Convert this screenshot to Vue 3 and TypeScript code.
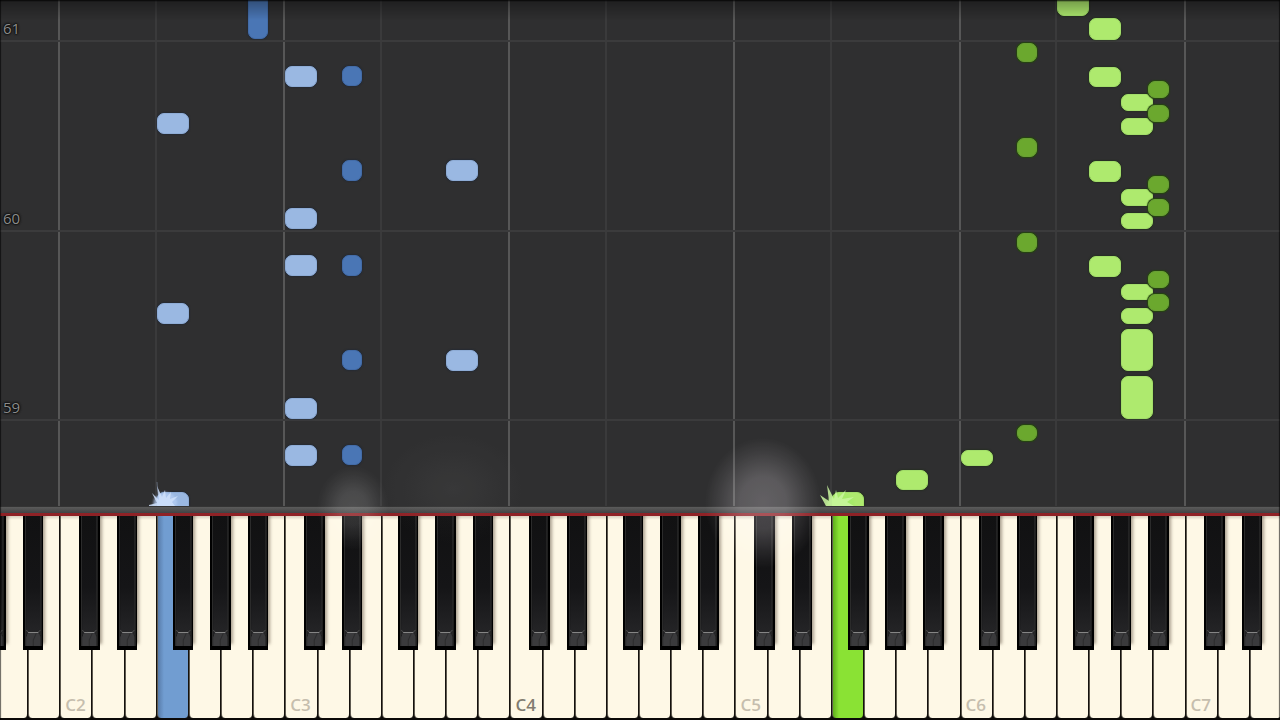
<script setup lang="ts">
type Hand = 'left' | 'right'

interface Note {
  pitch: string
  top: number
  end: number
  hand: Hand
}

// The strip shows 40 white keys, from A1 to E7.
const WHITE_COUNT = 40
const KEY = 100 / WHITE_COUNT
const SEMITONE = (KEY * 7) / 12
const ROLL_SPAN = 506
const NATURALS = ['C', 'D', 'E', 'F', 'G', 'A', 'B']
const SHARPS: Record<string, number> = { 'C#': 1, 'D#': 3, 'F#': 6, 'G#': 8, 'A#': 10 }

function octaveStart(octave: number): number {
  return (2 + (octave - 2) * 7) * KEY
}

function pitchLeft(pitch: string): number {
  const name = pitch.slice(0, -1)
  const start = octaveStart(Number(pitch.slice(-1)))
  return name in SHARPS ? start + SHARPS[name] * SEMITONE : start + NATURALS.indexOf(name) * KEY
}

const whiteKeys = Array.from({ length: WHITE_COUNT }, (_, i) => {
  const n = i + 5
  return NATURALS[n % 7] + (Math.floor(n / 7) + 1)
})

const blackKeys: string[] = ['G#1', 'A#1']
for (let octave = 2; octave <= 6; octave++) {
  for (const name of Object.keys(SHARPS)) blackKeys.push(name + octave)
}
blackKeys.push('C#7', 'D#7')

const pressed: Record<string, Hand> = { F2: 'left', F5: 'right' }

const guides = [2, 3, 4, 5, 6, 7].flatMap((o) =>
  o < 7 ? [{ pitch: 'C' + o, major: true }, { pitch: 'F' + o, major: false }] : [{ pitch: 'C' + o, major: true }],
)

const measures = [
  { number: 61, y: 42 },
  { number: 60, y: 232 },
  { number: 59, y: 421 },
]

function series(hand: Hand, pitch: string, spans: [number, number][]): Note[] {
  return spans.map(([top, end]) => ({ pitch, top, end, hand }))
}

const notes: Note[] = [
  ...series('left', 'F2', [[113, 134], [303, 324], [492, 514]]),
  ...series('left', 'A#2', [[-20, 39]]),
  ...series('left', 'C3', [[66, 87], [208, 229], [255, 276], [398, 419], [445, 466]]),
  ...series('left', 'D#3', [[66, 86], [160, 181], [255, 276], [350, 370], [445, 465]]),
  ...series('left', 'A3', [[160, 181], [350, 371]]),
  ...series('right', 'F5', [[492, 514]]),
  ...series('right', 'A5', [[470, 490]]),
  ...series('right', 'C6', [[450, 466]]),
  ...series('right', 'F6', [[-10, 16]]),
  ...series('right', 'G6', [[18, 40], [67, 87], [161, 182], [256, 277]]),
  ...series('right', 'A6', [[94, 111], [118, 135], [189, 206], [213, 229], [284, 300], [308, 324], [329, 371], [376, 419]]),
  ...series('right', 'D#6', [[43, 62], [138, 157], [233, 252], [425, 441]]),
  ...series('right', 'A#6', [[81, 98], [105, 122], [176, 193], [199, 216], [271, 288], [294, 311]]),
]

function noteStyle(n: Note) {
  return {
    left: pitchLeft(n.pitch) + '%',
    top: (n.top / ROLL_SPAN) * 100 + '%',
    height: ((n.end - n.top) / ROLL_SPAN) * 100 + '%',
  }
}

const glows = [
  { pitch: 'D#3', kind: 'small' },
  { pitch: 'G#3', kind: 'faint' },
  { pitch: 'C#5', kind: 'large' },
]
</script>

<template>
  <main class="app">
    <section class="roll" aria-label="Falling notes">
      <div class="strip">
        <div
          v-for="g in guides"
          :key="g.pitch"
          class="guide"
          :class="{ major: g.major }"
          :style="{ left: pitchLeft(g.pitch) + '%' }"
        ></div>
        <div
          v-for="m in measures"
          :key="m.number"
          class="measure"
          :style="{ bottom: ((ROLL_SPAN - m.y) / ROLL_SPAN) * 100 + '%' }"
        >
          <span>{{ m.number }}</span>
        </div>
        <div
          v-for="(n, i) in notes"
          :key="i"
          class="note"
          :class="[n.hand, { sharp: n.pitch.includes('#') }]"
          :style="noteStyle(n)"
        ></div>
        <svg
          v-for="(hand, pitch) in pressed"
          :key="pitch"
          class="spark"
          :class="hand"
          :style="{ left: pitchLeft(String(pitch)) + '%' }"
          viewBox="0 0 44 24"
          aria-hidden="true"
        >
          <g v-if="hand === 'left'">
            <path class="halo" d="M8 24 L9 17 L14 12 L20 10 L27 12 L32 18 L32 24Z" />
            <path class="ray" d="M4 23 L12 21 L7 11 L14 18 L12 4 L17 15 L20 8 L21 16 L26 10 L25 17 L33 14 L27 20 L30 24 L4 24Z" />
            <path class="streak" d="M13 12 L12 0" />
          </g>
          <g v-else>
            <path class="halo" d="M6 24 L8 18 L14 13 L20 11 L28 12 L34 18 L34 24Z" />
            <path class="ray" d="M6 24 L0 13 L9 19 L7 3 L14 17 L16 8 L18 16 L26 8 L22 17 L34 15 L27 20 L34 24Z" />
          </g>
        </svg>
      </div>
    </section>

    <div class="rail"></div>

    <section class="keyboard" aria-label="Piano keyboard">
      <div class="strip keys">
        <button
          v-for="k in whiteKeys"
          :key="k"
          type="button"
          class="white"
          :class="pressed[k]"
          :aria-label="k"
        >
          <span v-if="k[0] === 'C'" :class="{ middle: k === 'C4' }">{{ k }}</span>
        </button>
        <button
          v-for="k in blackKeys"
          :key="k"
          type="button"
          class="black"
          :aria-label="k"
          :style="{ left: pitchLeft(k) + '%' }"
        >
          <svg viewBox="0 0 20 134" preserveAspectRatio="none" aria-hidden="true">
            <defs>
              <linearGradient :id="'face' + k.replace('#', 's')" x1="0" y1="0" x2="0" y2="1">
                <stop offset="0" stop-color="#111112" />
                <stop offset=".6" stop-color="#151517" />
                <stop offset="1" stop-color="#252527" />
              </linearGradient>
            </defs>
            <rect width="20" height="134" fill="#000" />
            <rect x="3" width="14" height="119" :fill="`url(#face${k.replace('#', 's')})`" />
            <path d="M2.5 0V130" stroke="#2e2e2e" />
            <path d="M17.5 0V130" stroke="#3c3c3c" />
            <path d="M3 130V121Q4 117 6 117H14Q16 117 17 121V130Z" fill="#3a3a3c" />
            <path d="M10 130V124L13 117" fill="none" stroke="#2c2c2e" />
            <path d="M5 116.5H15" stroke="#858585" />
            <path d="M3 114L5 116M17 114L15 116" stroke="#4a4a4a" />
          </svg>
        </button>
      </div>
    </section>

    <div class="effects" aria-hidden="true">
      <div class="strip">
        <div
          v-for="g in glows"
          :key="g.pitch"
          class="glow"
          :class="g.kind"
          :style="{ left: pitchLeft(g.pitch) + '%' }"
        ></div>
      </div>
    </div>
  </main>
</template>

<style>
body {
  margin: 0;
  background: #2f2f30;
}
</style>

<style scoped>
.app {
  position: relative;
  display: flex;
  flex-direction: column;
  height: 100vh;
  overflow: hidden;
  background: #2f2f30;
  font-family: 'Open Sans', 'Noto Sans', sans-serif;
}

.app::after {
  content: '';
  position: absolute;
  inset: 0;
  pointer-events: none;
  background: linear-gradient(rgba(0, 0, 0, 0.85) 0, rgba(0, 0, 0, 0.3) 2px, rgba(0, 0, 0, 0) 20px);
  box-shadow: inset 1px 0 1px rgba(0, 0, 0, 0.6), inset -1px 0 1px rgba(0, 0, 0, 0.6);
}

.strip {
  position: relative;
  width: calc(100% + 6px);
  height: 100%;
  margin-left: -4px;
}

.roll {
  flex: 1;
  min-height: 0;
  overflow: hidden;
}

.guide {
  position: absolute;
  top: 0;
  bottom: 0;
  width: 2px;
  margin-left: -2px;
  background: #3a3a3b;
}

.guide.major {
  background: #575757;
}

.measure {
  position: absolute;
  left: 0;
  right: 0;
  padding-left: 7px;
  border-bottom: 2px solid #3b3b3c;
  color: #8c8c8c;
  font-size: 15px;
  font-weight: 500;
  line-height: 23px;
  text-shadow: 0 0 2px #000, 0 0 2px #000, 0 0 3px #111;
}

.note {
  position: absolute;
  box-sizing: border-box;
  width: 2.5%;
  border: 1px solid #8eacd6;
  border-radius: 7px;
  background: #9ab8e2;
  box-shadow: 0 0 2px #14233c;
}

.note.sharp {
  width: 1.6%;
  border-color: #436ca8;
  background: #4a76b5;
}

.note.right {
  border-color: #a3de6a;
  background: #aeea6e;
  box-shadow: 0 0 2px #173008;
}

.note.right.sharp {
  border-color: #6a9f36;
  background: #6ba82e;
  box-shadow: 0 0 1px 1px #25450f;
}

.spark {
  position: absolute;
  bottom: 0;
  width: 44px;
  height: 24px;
  margin-left: -12px;
}

.spark .halo {
  fill: #b7cff5;
  opacity: 0.7;
  filter: blur(1px);
}

.spark .ray {
  fill: #cfe0fb;
  opacity: 0.85;
}

.spark .streak {
  stroke: #8a98b0;
  opacity: 0.5;
}

.spark.right .halo {
  fill: #a4ec68;
}

.spark.right .ray {
  fill: #caf7a0;
}

.rail {
  height: 6px;
  border-top: 1px solid #343434;
  border-bottom: 3px solid #8f2226;
  background: linear-gradient(#5b5b5b, #4c4c4c 60%, #404345);
}

.keyboard {
  height: 204px;
  overflow: hidden;
  background: #0c0a08;
}

.keys {
  display: grid;
  grid-template-columns: repeat(40, 1fr);
  box-sizing: border-box;
  padding-bottom: 2px;
}

button {
  margin: 0;
  padding: 0;
  border: 0;
  font: inherit;
}

.white {
  display: flex;
  align-items: flex-end;
  min-width: 0;
  border-right: 1px solid #14110d;
  border-left: 1px solid #5f5a50;
  border-radius: 0 0 4px 4px;
  background: linear-gradient(#d9d0c0, #fef8e6 4px);
}

.white.left {
  background: linear-gradient(90deg, #587caa, #719dd1 6px);
}

.white.right {
  background: linear-gradient(90deg, #5fae1c, #8ae234 6px);
}

.white span {
  padding-left: 4px;
  color: #c6beae;
  font-size: 17px;
  font-weight: 600;
  line-height: 26px;
}

.white .middle {
  color: #827c70;
}

.black {
  position: absolute;
  top: 0;
  width: 1.6%;
  height: 134px;
  background: #000;
  box-shadow: 3px -5px 3px -1px rgba(90, 75, 60, 0.5);
}

.black svg {
  display: block;
  width: 100%;
  height: 100%;
}

.effects {
  position: absolute;
  right: 0;
  bottom: 214px;
  left: 0;
  height: 0;
  pointer-events: none;
  mix-blend-mode: screen;
}

.glow {
  position: absolute;
  width: 72px;
  height: 84px;
  margin: -40px 0 0 -25px;
  border-radius: 50%;
  background: radial-gradient(closest-side, rgba(130, 130, 130, 0.3), rgba(130, 130, 130, 0.25) 40%, rgba(130, 130, 130, 0.07) 80%, rgba(130, 130, 130, 0));
}

.glow.large {
  width: 116px;
  height: 130px;
  margin: -68px 0 0 -49px;
  background: radial-gradient(closest-side, rgba(150, 144, 150, 0.42), rgba(150, 144, 150, 0.36) 40%, rgba(150, 144, 150, 0.12) 78%, rgba(150, 144, 150, 0));
}

.glow.faint {
  width: 140px;
  height: 110px;
  margin: -72px 0 0 -52px;
  background: radial-gradient(closest-side, rgba(120, 120, 120, 0.09), rgba(120, 120, 120, 0));
}
</style>
